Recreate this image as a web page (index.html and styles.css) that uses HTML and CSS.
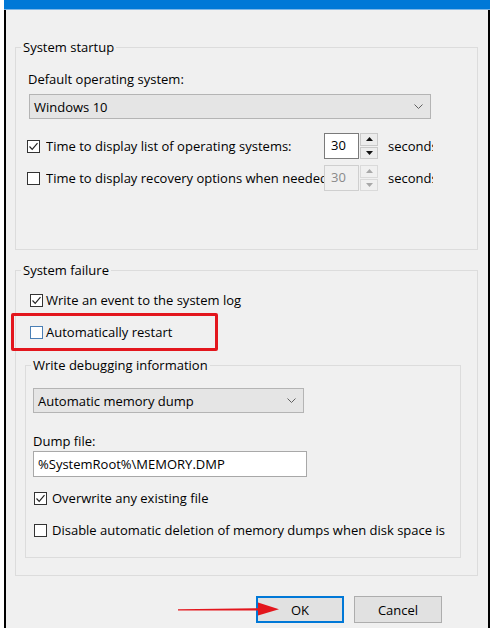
FILE: index.html
```html
<!DOCTYPE html>
<html>
<head>
<meta charset="utf-8">
<link rel="stylesheet" href="styles.css">
</head>
<body>
<div class="window">
  <div class="titlebar"></div>
  <div class="client">
    <fieldset class="group startup">
      <legend>System startup</legend>
      <div class="label">Default operating system:</div>
      <div class="combo os">
        <span class="combo-text">Windows 10</span>
        <svg class="chev" width="9" height="5" viewBox="0 0 9 5"><path d="M0.5 0.5 L4.5 4.5 L8.5 0.5" fill="none" stroke="#606060" stroke-width="1"/></svg>
      </div>
      <div class="row first">
        <span class="cb checked"><svg width="11" height="11" viewBox="0 0 11 11"><path d="M1.5 5.5 L4.2 8.3 L9.5 2.2" fill="none" stroke="#222" stroke-width="1.2"/></svg></span>
        <span class="rowlabel">Time to display list of operating systems:</span>
        <span class="spin">
          <span class="spin-text">30</span>
          <span class="spin-btns">
            <span class="sbtn"><svg width="7" height="4" viewBox="0 0 7 4"><path d="M0 4 L3.5 0 L7 4 Z" fill="#111"/></svg></span>
            <span class="sbtn"><svg width="7" height="4" viewBox="0 0 7 4"><path d="M0 0 L3.5 4 L7 0 Z" fill="#111"/></svg></span>
          </span>
        </span>
        <span class="unit">seconds</span>
      </div>
      <div class="row second">
        <span class="cb"></span>
        <span class="rowlabel">Time to display recovery options when needed:</span>
        <span class="spin disabled">
          <span class="spin-text">30</span>
          <span class="spin-btns">
            <span class="sbtn"><svg width="7" height="4" viewBox="0 0 7 4"><path d="M0 4 L3.5 0 L7 4 Z" fill="#a8a8a8"/></svg></span>
            <span class="sbtn"><svg width="7" height="4" viewBox="0 0 7 4"><path d="M0 0 L3.5 4 L7 0 Z" fill="#a8a8a8"/></svg></span>
          </span>
        </span>
        <span class="unit">seconds</span>
      </div>
    </fieldset>

    <fieldset class="group failure">
      <legend>System failure</legend>
      <div class="crow">
        <span class="cb checked"><svg width="11" height="11" viewBox="0 0 11 11"><path d="M1.5 5.5 L4.2 8.3 L9.5 2.2" fill="none" stroke="#222" stroke-width="1.2"/></svg></span>
        <span>Write an event to the system log</span>
      </div>
      <div class="crow restart">
        <span class="cb focus"></span>
        <span>Automatically restart</span>
      </div>

      <fieldset class="group debug">
        <legend>Write debugging information</legend>
        <div class="combo dump">
          <span class="combo-text">Automatic memory dump</span>
          <svg class="chev" width="9" height="5" viewBox="0 0 9 5"><path d="M0.5 0.5 L4.5 4.5 L8.5 0.5" fill="none" stroke="#606060" stroke-width="1"/></svg>
        </div>
        <div class="label dumplabel">Dump file:</div>
        <div class="textbox">%SystemRoot%\MEMORY.DMP</div>
        <div class="crow overwrite">
          <span class="cb checked"><svg width="11" height="11" viewBox="0 0 11 11"><path d="M1.5 5.5 L4.2 8.3 L9.5 2.2" fill="none" stroke="#222" stroke-width="1.2"/></svg></span>
          <span>Overwrite any existing file</span>
        </div>
        <div class="crow disable">
          <span class="cb"></span>
          <span class="cliplabel">Disable automatic deletion of memory dumps when disk space is low</span>
        </div>
      </fieldset>
    </fieldset>

    <div class="buttons">
      <button class="btn default">OK</button>
      <button class="btn">Cancel</button>
    </div>
  </div>

  <div class="highlight"></div>
  <svg class="arrow" width="104" height="16" viewBox="0 0 104 16">
    <path d="M0 8.2 L82 7.2 L82 9.4 L0 9.6 Z" fill="#e3161d"/>
    <path d="M80 1.5 L101 8.2 L80 14.5 Z" fill="#e3161d"/>
  </svg>
</div>
</body>
</html>
```

FILE: styles.css
```css
* { box-sizing: border-box; }

html, body {
  margin: 0;
  padding: 0;
  background: #ffffff;
}

body {
  font-family: "Open Sans", "Noto Sans", "Liberation Sans", sans-serif;
  font-size: 13px;
  color: #000;
  overflow: hidden;
}

.window {
  position: relative;
  margin-left: 4px;
  width: 486px;
  height: 628px;
}

.titlebar {
  height: 10px;
  background: #0078d7;
  border-bottom: 1px solid #7fb6e6;
}

.client {
  height: 618px;
  background: #f0f0f0;
  border-left: 2px solid #000;
  border-right: 2px solid #000;
  padding-top: 1px;
}

fieldset.group {
  border: 1px solid #dcdcdc;
  margin: 0;
  min-width: 0;
}

fieldset.group legend {
  padding: 0 2px;
  line-height: 16px;
  height: 16px;
}

.startup {
  margin: 28px 10px 0 9px !important;
  padding: 16px 0 58px 12px;
}
.startup legend { margin-left: -7px; }

.label {
  line-height: 16px;
  height: 16px;
}

.combo {
  display: flex;
  align-items: center;
  justify-content: space-between;
  height: 25px;
  background: #e5e5e5;
  border: 1px solid #b4b4b4;
  padding: 0 7px 0 4px;
}
.combo.os {
  margin-top: 7px;
  margin-left: 1px;
  width: 402px;
}
.combo-text { line-height: 16px; }

.row {
  display: flex;
  align-items: center;
  height: 26px;
}
.row.first { margin-top: 14px; }
.row.second { margin-top: 6px; }

.cb {
  flex: none;
  width: 13px;
  height: 13px;
  border: 1px solid #333;
  background: #fff;
  display: flex;
  align-items: center;
  justify-content: center;
}
.cb.focus { border-color: #4a7fb5; }

.row .cb { margin-left: -1px; margin-right: 6px; }

.rowlabel {
  width: 278px;
  flex: none;
  white-space: nowrap;
  overflow: hidden;
}

.spin {
  display: flex;
  flex: none;
  height: 26px;
}
.spin-text {
  width: 35px;
  height: 26px;
  border: 1px solid #7a7a7a;
  background: #fff;
  padding-left: 6px;
  line-height: 23px;
}
.spin-btns {
  display: flex;
  flex-direction: column;
  justify-content: space-between;
  width: 18px;
  margin-left: 1px;
}
.sbtn {
  height: 12.5px;
  background: #ececec;
  border: 1px solid #c9c9c9;
  display: flex;
  align-items: center;
  justify-content: center;
}
.spin.disabled .spin-text {
  background: #f0f0f0;
  border-color: #cfcfcf;
  color: #8a8a8a;
}
.spin.disabled .sbtn {
  background: #f0f0f0;
  border-color: #dadada;
}

.unit {
  margin-left: 10px;
  width: 45px;
  flex: none;
  white-space: nowrap;
  overflow: hidden;
}

.failure {
  margin: 12px 10px 0 9px !important;
  padding: 14px 0 17px 14px;
}
.failure > legend { margin-left: -9px; }

.crow {
  display: flex;
  align-items: center;
  height: 16px;
  line-height: 16px;
  white-space: nowrap;
}
.crow .cb { margin-right: 3px; }
.crow.restart { margin-top: 16px; }

.debug {
  margin: 17px 16px 0 -5px !important;
  padding: 15px 0 19px 7px;
}
.debug > legend { margin-left: -2px; }

.combo.dump {
  width: 271px;
  height: 25px;
}
.dumplabel { margin-top: 20px; }

.textbox {
  margin-top: 2px;
  width: 274px;
  height: 26px;
  background: #fff;
  border: 1px solid #a8a8a8;
  padding-left: 4px;
  line-height: 24px;
}

.crow.overwrite { margin-top: 13px; margin-left: 1px; }
.crow.disable { margin-top: 16px; margin-left: 1px; }
.crow.overwrite .cb, .crow.disable .cb { margin-right: 5px; }

.cliplabel {
  width: 393px;
  overflow: hidden;
}

.buttons {
  display: flex;
  justify-content: flex-end;
  gap: 10px;
  margin-top: 20px;
  margin-right: 46px;
}
.btn {
  font-family: inherit;
  font-size: 13px;
  color: #000;
  width: 88px;
  height: 27px;
  background: #e1e1e1;
  border: 1px solid #adadad;
  padding: 0;
}
.btn.default {
  border: 2px solid #0078d7;
}

.highlight {
  position: absolute;
  left: 7px;
  top: 313px;
  width: 207px;
  height: 38px;
  border: 3px solid #e3161d;
  border-radius: 2px;
}

.arrow {
  position: absolute;
  left: 174px;
  top: 601px;
}
```
